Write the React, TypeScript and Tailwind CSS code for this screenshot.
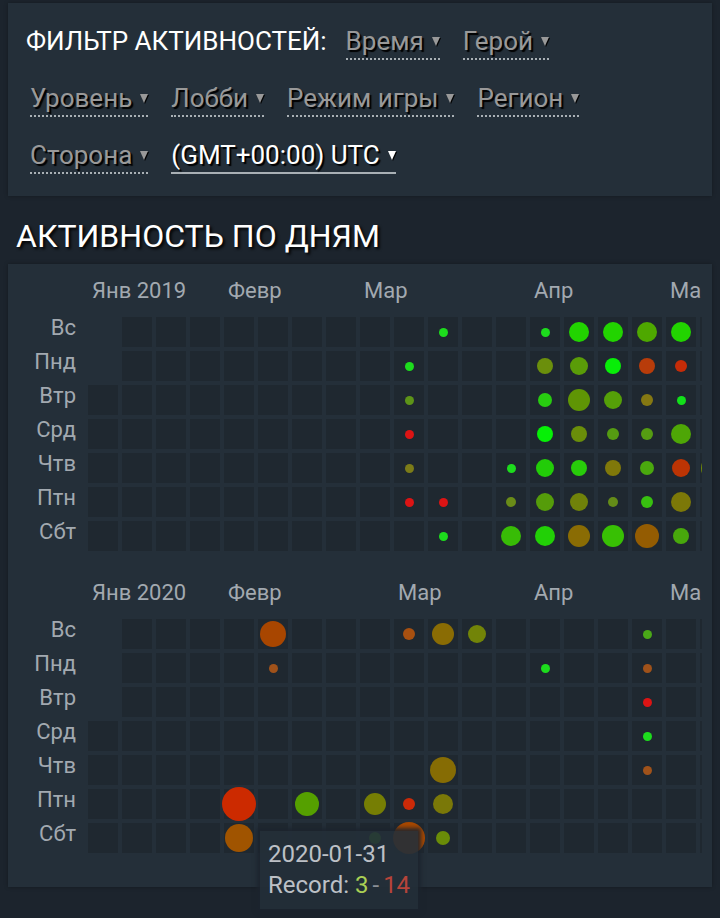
import { clsx } from 'clsx';

const DAYS = ['Вс', 'Пнд', 'Втр', 'Срд', 'Чтв', 'Птн', 'Сбт'];
const WEEKS = Array.from({ length: 19 }, (_, i) => i);

const FILTERS = ['Время', 'Герой', 'Уровень', 'Лобби', 'Режим игры', 'Регион', 'Сторона'];

// week, dot diameter, color
type Dot = [number, number, string];

interface Year {
  year: number;
  // first weekday of the year
  firstDay: number;
  months: { label: string; span: number }[];
  days: Dot[][];
}

const YEARS: Year[] = [
  {
    year: 2019,
    firstDay: 2,
    months: [
      { label: 'Янв 2019', span: 4 },
      { label: 'Февр', span: 4 },
      { label: 'Мар', span: 5 },
      { label: 'Апр', span: 4 },
      { label: 'Ма', span: 2 },
    ],
    days: [
      [[10, 9, '#1ddc1d'], [13, 9, '#1ddc1d'], [14, 20, '#22d400'], [15, 20, '#22d400'], [16, 20, '#4ea800'], [17, 20, '#22d400']],
      [[9, 9, '#1ddc1d'], [13, 16, '#6b8f0c'], [14, 18, '#5a9c08'], [15, 16, '#08ee08'], [16, 16, '#b83c0a'], [17, 12, '#c52c08']],
      [[9, 9, '#5d9418'], [13, 14, '#28cc10'], [14, 22, '#5f9505'], [15, 18, '#55a008'], [16, 12, '#857812'], [17, 9, '#12e01a']],
      [[9, 9, '#dc1414'], [13, 16, '#06f006'], [14, 16, '#6a8e0a'], [15, 12, '#559c12'], [16, 12, '#559c12'], [17, 20, '#4ea606']],
      [[9, 9, '#7c7c18'], [12, 9, '#1ddc1d'], [13, 18, '#22cc08'], [14, 16, '#28cc0a'], [15, 16, '#80780a'], [16, 14, '#4aa80e'], [17, 18, '#bc3404'], [18, 28, '#6f8a08']],
      [[9, 9, '#dc1414'], [10, 9, '#dc1414'], [12, 10, '#6a8c18'], [13, 18, '#559c0a'], [14, 18, '#70820a'], [15, 10, '#648c18'], [16, 12, '#38c010'], [17, 20, '#7c7808']],
      [[10, 9, '#1ddc1d'], [12, 20, '#38bc06'], [13, 20, '#22d006'], [14, 22, '#8a6c04'], [15, 22, '#38c004'], [16, 24, '#945c02'], [17, 16, '#48a80c']],
    ],
  },
  {
    year: 2020,
    firstDay: 3,
    months: [
      { label: 'Янв 2020', span: 4 },
      { label: 'Февр', span: 5 },
      { label: 'Мар', span: 4 },
      { label: 'Апр', span: 4 },
      { label: 'Ма', span: 2 },
    ],
    days: [
      [[5, 26, '#a84600'], [9, 12, '#a85010'], [10, 22, '#8a6c04'], [11, 18, '#728408'], [16, 9, '#4aa818']],
      [[5, 9, '#a0521a'], [13, 9, '#1ddc1d'], [16, 9, '#a0521a']],
      [[16, 9, '#dc1414']],
      [[16, 9, '#1ddc1d']],
      [[10, 26, '#866c04'], [16, 9, '#a0521a']],
      [[4, 34, '#cc2a00'], [6, 24, '#55a000'], [8, 22, '#767e04'], [9, 12, '#cc2a08'], [10, 20, '#7a7808']],
      [[4, 28, '#a05400'], [8, 12, '#4aa818'], [9, 32, '#a84800'], [10, 14, '#6a8c08']],
    ],
  },
];

function FilterButton({ label, active }: { label: string; active?: boolean }) {
  return (
    <button
      type="button"
      className={clsx(
        'mx-1 flex items-center gap-2 border-b-2 border-[#a9b0b5] pb-px leading-8 [text-shadow:2px_2px_1px_#000]',
        active ? 'border-solid text-white' : 'border-dotted text-[#999]'
      )}
    >
      {label}
      <svg viewBox="0 0 8 9" className="h-[9px] w-2 overflow-visible drop-shadow-[1px_1px_0_#000]" aria-hidden="true">
        <path d="M0 0h8L4 9z" fill="currentColor" />
      </svg>
    </button>
  );
}

function YearTable({ months, days, firstDay, year }: Year) {
  return (
    <div className="overflow-hidden">
      <table aria-label={`${year}`} className="w-[726px] table-fixed border-separate border-spacing-0">
        <thead>
          <tr className="h-[51px]">
            <td className="w-20" />
            {months.map((m) => (
              <th key={m.label} colSpan={m.span} scope="colgroup" className="pb-0.5 pl-1 text-left font-normal whitespace-nowrap">
                {m.label}
              </th>
            ))}
          </tr>
        </thead>
        <tbody>
          {DAYS.map((day, row) => (
            <tr key={day} className="h-[34px]">
              <th scope="row" className="pr-3 pb-3 text-right leading-[22px] font-normal">
                {day}
              </th>
              {WEEKS.map((week) => {
                const dot = days[row].find((d) => d[0] === week);
                const empty = week === 0 && row < firstDay;
                return (
                  <td key={week} className="p-0">
                    <div className={clsx('mb-1 flex size-[30px] items-center justify-center', !empty && 'bg-[#1f2830]')}>
                      {dot && (
                        <span
                          className="shrink-0 rounded-full"
                          style={{ width: dot[1], height: dot[1], backgroundColor: dot[2] }}
                        />
                      )}
                    </div>
                  </td>
                );
              })}
            </tr>
          ))}
        </tbody>
      </table>
    </div>
  );
}

export default function App() {
  return (
    <div className="min-h-screen bg-[#1c242d] px-2 pt-[3px] pb-[31px] font-[Roboto,sans-serif] text-[#a2a9b0]">
      <section className="flex flex-wrap items-start gap-x-[15px] gap-y-[22px] bg-[#242f39] py-[22px] pr-8 pl-[18px] text-[26px] shadow-[0_0_4px_rgba(0,0,0,0.3)]">
        <h2 className="leading-8 text-white uppercase">Фильтр активностей:</h2>
        {FILTERS.map((label) => (
          <FilterButton key={label} label={label} />
        ))}
        <FilterButton label="(GMT+00:00) UTC" active />
      </section>

      <h1 className="px-2 pt-[22px] pb-[10px] text-[32px] leading-9 text-white uppercase [text-shadow:2px_2px_3px_#000]">
        Активность по дням
      </h1>

      <section className="relative flex flex-col gap-[13px] bg-[#242f39] pt-0.5 pr-[10px] pb-[30px] text-[22px] shadow-[0_0_4px_rgba(0,0,0,0.3)]">
        {YEARS.map((y) => (
          <YearTable key={y.year} {...y} />
        ))}

        <div
          role="tooltip"
          className="absolute top-[567px] left-[252px] bg-[#242f39]/90 p-2 text-[24px] leading-[31px] whitespace-nowrap text-[#bcc0c6] shadow-[0_0_4px_3px_rgba(28,36,45,0.9)]"
        >
          <div>2020-01-31</div>
          <div>
            Record: <span className="text-[#a9cf54]">3</span>
            <span className="px-1 text-[#8a8f96]">-</span>
            <span className="text-[#b5443a]">14</span>
          </div>
        </div>
      </section>
    </div>
  );
}
